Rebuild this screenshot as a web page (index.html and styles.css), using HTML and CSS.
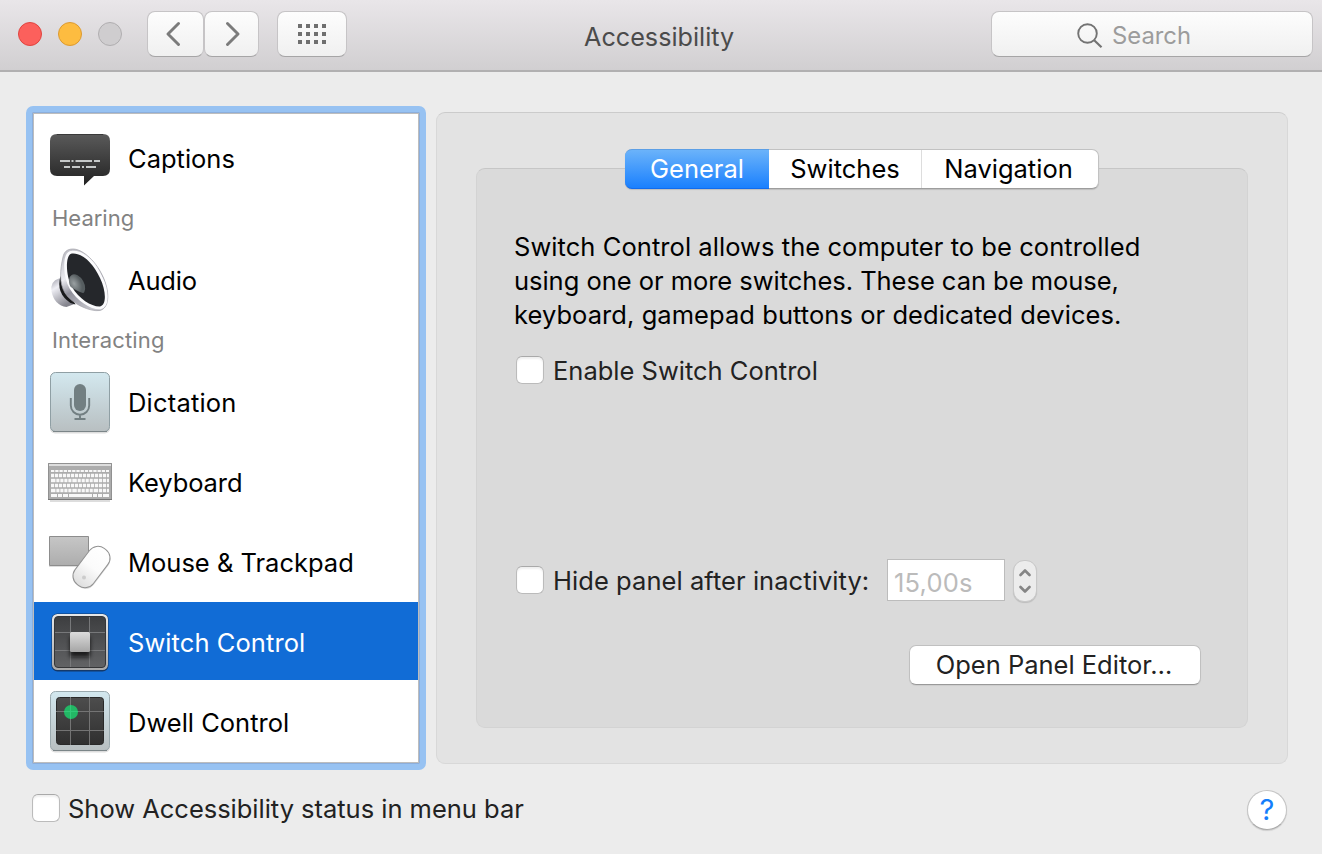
FILE: index.html
```html
<!DOCTYPE html>
<html lang="en">
<head>
<meta charset="utf-8">
<title>Accessibility</title>
<link rel="stylesheet" href="styles.css">
</head>
<body>
<header class="titlebar">
  <div class="lights"><span class="light close"></span><span class="light minimize"></span><span class="light zoom"></span></div>
  <div class="nav">
    <button class="tool back"><svg width="14" height="26" viewBox="0 0 14 26"><path d="M12.500 2.500 2 13l10.500 10.500" fill="none" stroke="#7b7b7b" stroke-width="2.900" stroke-linecap="round" stroke-linejoin="round"/></svg></button>
    <button class="tool forward"><svg width="14" height="26" viewBox="0 0 14 26"><path d="M1.500 2.500 12 13 1.500 23.500" fill="none" stroke="#7b7b7b" stroke-width="2.900" stroke-linecap="round" stroke-linejoin="round"/></svg></button>
  </div>
  <button class="tool all"><svg width="28" height="20" viewBox="0 0 28 20"><path d="M0 2h28M0 10h28M0 18h28" stroke="#6f6f6f" stroke-width="4" stroke-dasharray="4 4"/></svg></button>
  <h1 class="title">Accessibility</h1>
  <div class="search"><svg width="26" height="26" viewBox="0 0 26 26"><circle cx="10.500" cy="10.500" r="9.300" fill="none" stroke="#737373" stroke-width="1.900"/><path d="m17.200 17.200 7.300 7" stroke="#737373" stroke-width="2.200"/></svg><span class="placeholder">Search</span></div>
</header>
<main class="content">
  <nav class="sidebar">
    <div class="item"><span class="icon"><svg width="64" height="64" viewBox="0 0 64 64"><defs><linearGradient id="cap" x2="0" y2="1"><stop stop-color="#5a5a5a"/><stop offset="1" stop-color="#222"/></linearGradient></defs><path d="M9 8h46q7 0 7 7v28q0 7-7 7h-9L36 59.500V50H9q-7 0-7-7V15q0-7 7-7Z" fill="url(#cap)"/><path d="M9 8.500h46" stroke="#3a3a3a"/><path d="M12 35h10m1.500 0h2m2 0h16.500m2 0h6M16 41h6m2 0h8m2 0h2m2 0h10" stroke="#c6c9c9" stroke-width="2"/></svg></span><span>Captions</span></div>
    <h2 class="group">Hearing</h2>
    <div class="item"><span class="icon"><svg width="64" height="64" viewBox="0 0 64 64"><defs><linearGradient id="rear" x2=".5" y2="1"><stop stop-color="#9a9aa5"/><stop offset=".35" stop-color="#efeff5"/><stop offset="1" stop-color="#85858e"/></linearGradient><radialGradient id="dome" cx=".35" cy=".4"><stop stop-color="#9aa0a2"/><stop offset="1" stop-color="#565d60"/></radialGradient><linearGradient id="cone" gradientUnits="userSpaceOnUse" x1="14" y1="10" x2="40" y2="62"><stop stop-color="#c3c3ca"/><stop offset=".35" stop-color="#ececf1"/><stop offset=".6" stop-color="#8f8f9a"/><stop offset="1" stop-color="#c4c4cb"/></linearGradient><clipPath id="mouth"><path d="M24 5.500C17 6 17.500 28 24 39c7 12 20 20 28 19.500 7-1.500 6-16.500 0-28.500C45 15 34 4.500 24 5.500Z"/></clipPath></defs><path d="M11 30.500Q2 33 3.500 43.500q3 14 15 15.500l8-3-9-26Z" fill="url(#rear)"/><path d="M12.500 28q-5 17 10 27l5 1.500Z" fill="#18191b"/><path d="M25 1c10 0 24 13 31 30 6 15 5 29-4 31.500C42 64 24 56 17 45 11 35 12 22 15 9c1-5 4-8 10-8Z" fill="url(#cone)" stroke="#a4a4aa" stroke-width=".7"/><path d="M24 5.500C17 6 17.500 28 24 39c7 12 20 20 28 19.500 7-1.500 6-16.500 0-28.500C45 15 34 4.500 24 5.500Z" fill="#25272b" stroke="#fbfbfd" stroke-width="5.500"/><path d="M24 5.500C17 6 17.500 28 24 39c7 12 20 20 28 19.500 7-1.500 6-16.500 0-28.500C45 15 34 4.500 24 5.500Z" fill="#25272b"/><ellipse cx="29" cy="36.500" rx="7" ry="11" transform="rotate(-29 29 36.500)" fill="url(#dome)" clip-path="url(#mouth)"/></svg></span><span class="audio">Audio</span></div>
    <h2 class="group interacting">Interacting</h2>
    <div class="item"><span class="icon"><svg width="64" height="64" viewBox="0 0 64 64"><defs><linearGradient id="pale" x2="0" y2="1"><stop stop-color="#d3e8ef"/><stop offset="1" stop-color="#b8bfc1"/></linearGradient></defs><rect x="2" y="3.500" width="60" height="60" rx="5" fill="#0002"/><rect x="2.500" y="2.500" width="59" height="59" rx="5" fill="url(#pale)" stroke="#8f9fa4"/><path d="M5 61.500h54" stroke="#7b8588"/><rect x="26" y="14" width="12" height="27" rx="6" fill="#727f82"/><path d="M22.800 28v7.500a9.200 9.200 0 0 0 18.400 0V28M32 45v4M26.500 49h11" fill="none" stroke="#727f82" stroke-width="1.900"/></svg></span><span class="dictation">Dictation</span></div>
    <div class="item"><span class="icon"><svg width="64" height="64" viewBox="0 0 64 64"><path d="M2 50.500h60" stroke="#0002" stroke-width="3"/><path d="M0 13h64v37H0Z" fill="#acacac"/><path d="M1 14h62v2H1Z" fill="#ddd"/><path d="M.5 13.500h63v36H.5Z" fill="none" stroke="#919191"/><path d="M0 49.500h64" stroke="#777"/><path d="M3 21h58" stroke="#f8f8f8" stroke-width="2" stroke-dasharray="3.300 .93"/><path d="M3 25.500h58m-58 10h58" stroke="#f8f8f8" stroke-width="3.300" stroke-dasharray="3.200 .8"/><path d="M3 30.500h58m-58 10h58" stroke="#f8f8f8" stroke-width="3.300" stroke-dasharray="4.500 .8 3.200 .8 3.200 .8 3.200 .8 3.200 .8"/><path d="M3 45.500h6m1 0h4m1 0h5m1 0h23m1 0h4m1 0h4m1 0h6" stroke="#f8f8f8" stroke-width="3"/></svg></span><span class="keyboard">Keyboard</span></div>
    <div class="item"><span class="icon"><svg width="64" height="64" viewBox="0 0 64 64"><defs><linearGradient id="pad" x2="0" y2="1"><stop stop-color="#c6c6c6"/><stop offset="1" stop-color="#adadad"/></linearGradient><linearGradient id="mouse" x2="0" y2="1"><stop stop-color="#fff"/><stop offset=".5" stop-color="#fbfbfb"/><stop offset="1" stop-color="#dedede"/></linearGradient></defs><path d="M1.500 6.500h39v29h-39Z" fill="url(#pad)" stroke="#8d8d8d"/><path d="M1 36.500h40" stroke="#0002"/><rect x="31.500" y="15.500" width="24" height="45" rx="10.500" transform="rotate(37 43.500 38)" fill="#0002"/><rect x="32" y="14.500" width="23" height="45" rx="10.500" transform="rotate(37 43.500 37)" fill="url(#mouse)" stroke="#929292"/><circle cx="36" cy="47.500" r="2" fill="#ccc"/></svg></span><span>Mouse &amp; Trackpad</span></div>
    <div class="item selected"><span class="icon"><svg width="64" height="64" viewBox="0 0 64 64"><defs><linearGradient id="frame" x2="0" y2="1"><stop stop-color="#e8e8e8"/><stop offset="1" stop-color="#a9a9a9"/></linearGradient><linearGradient id="well" x2="0" y2="1"><stop stop-color="#3d3e40"/><stop offset="1" stop-color="#626365"/></linearGradient><linearGradient id="key" x2="0" y2="1"><stop stop-color="#dcdcdc"/><stop offset="1" stop-color="#a5a5a5"/></linearGradient><filter id="soft" x="-50%" y="-50%" width="200%" height="200%"><feGaussianBlur stdDeviation="2"/></filter></defs><rect x="3.500" y="3.500" width="57" height="58" rx="6" fill="#153969"/><rect x="4" y="4" width="56" height="56" rx="5.500" fill="url(#frame)"/><rect x="6.500" y="6.500" width="51" height="51" rx="3.500" fill="url(#well)" stroke="#353638"/><path d="M22.500 7v50M41.500 7v50M7 22.500h50M7 40.500h50" stroke="#77787a"/><rect x="22" y="27" width="20" height="20" fill="#111" opacity=".8" filter="url(#soft)"/><rect x="22" y="22" width="20" height="20" rx="1.500" fill="url(#key)"/></svg></span><span class="switch">Switch Control</span></div>
    <div class="item"><span class="icon"><svg width="64" height="64" viewBox="0 0 64 64"><defs><linearGradient id="dark" x2="0" y2="1"><stop stop-color="#4d4d4d"/><stop offset="1" stop-color="#303030"/></linearGradient></defs><rect x="2" y="2.500" width="60" height="60" rx="5" fill="#0002"/><rect x="2.500" y="1.500" width="59" height="59" rx="5" fill="url(#pale)" stroke="#9aa9ae"/><path d="M5 60.500h54" stroke="#7b8588"/><rect x="8.500" y="7.500" width="47" height="47" rx="3" fill="url(#dark)" stroke="#292929"/><path d="M22.500 7v48M41.500 7v48M8 21.500h48M8 40.500h48" stroke="#747474"/><circle cx="23" cy="22" r="7" fill="#23b765"/><path d="M22.500 15v14M16 21.500h14" stroke="#31c978"/></svg></span><span>Dwell Control</span></div>
  </nav>
  <section class="pane">
    <div class="box">
      <div class="tabs"><button class="tab active">General</button><button class="tab">Switches</button><button class="tab last">Navigation</button></div>
      <p class="intro"><span class="line-a">Switch Control allows the computer to be controlled</span><br><span class="line-b">using one or more switches. These can be mouse,</span><br><span class="line-a">keyboard, gamepad buttons or dedicated devices.</span></p>
      <label class="check enable"><span class="checkbox"></span><span>Enable Switch Control</span></label>
      <div class="hide-row"><label class="check"><span class="checkbox"></span><span class="hide-label">Hide panel after inactivity:</span></label><span class="field">15,00s</span><span class="stepper"><svg width="12" height="26" viewBox="0 0 12 26"><path d="m1.500 7 4.500-4.500L10.500 7M1.500 19 6 23.500l4.500-4.500" fill="none" stroke="#858585" stroke-width="2.600" stroke-linecap="round" stroke-linejoin="round"/></svg></span></div>
      <button class="open">Open Panel Editor…</button>
    </div>
  </section>
</main>
<footer class="footer"><label class="check"><span class="checkbox"></span><span class="status-label">Show Accessibility status in menu bar</span></label><button class="help">?</button></footer>
</body>
</html>
```
FILE: styles.css
```css
* { box-sizing: border-box; }
body { margin: 0; width: 1322px; height: 854px; overflow: hidden; display: flex; flex-direction: column; background: #ececec; color: #000; font: 25.500px/34px Inter, "Liberation Sans", sans-serif; white-space: nowrap; }
button { font: inherit; color: inherit; padding: 0; border: 0; display: flex; align-items: center; justify-content: center; }
svg { display: block; flex: none; }
h1, h2, p { margin: 0; font-weight: 400; }
.titlebar { height: 72px; flex: none; display: flex; align-items: flex-start; padding: 11px 9px 0 18px; background: linear-gradient(#e9e6e9, #d1cfd1); border-bottom: 2px solid #b1b0b1; }
.lights { display: flex; gap: 16px; padding-top: 11px; width: 129px; }
.light { width: 24px; height: 24px; border-radius: 50%; border: 1px solid; }
.close { background: #fc605c; border-color: #e0443f; }
.minimize { background: #fdbc40; border-color: #dc9a31; }
.zoom { background: #cfcdcf; border-color: #b0aeb0; }
.nav { display: flex; margin-right: 18px; }
.tool, .search { height: 46px; border: 1px solid #c6c4c6; border-bottom-color: #a6a5a6; border-radius: 8px; background: linear-gradient(#fdfdfd, #f0f0f0); }
.back { width: 57px; padding-right: 6px; }
.forward { width: 55px; padding-left: 2px; }
.all { width: 70px; }
.title { flex: 1; padding-left: 237px; font-size: 25.200px; line-height: 52px; color: #4b4b4b; }
.search { width: 322px; display: flex; align-items: center; justify-content: center; gap: 9px; padding: 3px 36px 0 0; color: #9c9c9c; }
.placeholder { font-size: 23.800px; padding-top: 1px; }
.content { display: flex; gap: 10px; padding: 34px 34px 0 26px; flex: none; }
.sidebar { width: 400px; height: 664px; border: 6px solid #97c2f2; border-radius: 7px; background: #fff; box-shadow: inset 0 0 0 1px #8caedb, inset 0 0 0 2px #bdbdbd; padding: 6px 2px 0; }
.item { height: 78px; margin-bottom: 2px; display: flex; align-items: center; padding: 4px 0 0 14px; gap: 16px; }
.icon { margin-top: -2px; }
.item.selected { background: #116cd6; color: #fff; }
.audio { letter-spacing: -.2px; }
.dictation { letter-spacing: .2px; }
.keyboard { letter-spacing: -.1px; }
.switch { letter-spacing: .07px; }
.group { height: 42px; padding: 2px 0 0 18px; font-size: 22px; line-height: 36px; color: #828282; }
.interacting { letter-spacing: .15px; }
.pane { width: 852px; height: 652px; margin-top: 6px; padding: 55px 39px 0; background: #e3e3e3; border: 1px solid #d8d8d8; border-top-color: #cbcbcb; border-radius: 9px; }
.box { height: 560px; background: #dadada; border: 1px solid #d3d3d3; border-top-color: #c6c6c6; border-radius: 9px; display: flex; flex-direction: column; padding-left: 37px; }
.tabs { display: flex; flex: none; width: 474px; height: 40px; margin: -20px 0 0 111px; border: 1px solid #c2c2c2; border-bottom-color: #9d9d9d; border-radius: 7px; background: #fff; box-shadow: 0 1px 1px #0002; }
.tab { background: none; width: 176px; }
.tab:nth-child(2) { width: 153px; border-right: 1px solid #ddd; }
.tab.last { padding-right: 3px; }
.tab.active { width: 144px; margin: -1px 0 -1px -1px; color: #fff; background: linear-gradient(#6bb3fa, #1a80fe); border-radius: 7px 0 0 7px; border-bottom: 1px solid #116cee; border-top: 1px solid #5c9fe6; }
.intro { margin-top: 41px; height: 102px; }
.line-a { letter-spacing: .06px; }
.line-b { letter-spacing: -.03px; }
.check { display: flex; align-items: center; gap: 9px; color: #222; }
.checkbox { width: 28px; height: 28px; border: 1px solid #bbb; border-top-color: #a9a9a9; border-radius: 6px; background: #fff; box-shadow: inset 0 2px 2px #0001; }
.enable { margin: 22px 0 0 2px; }
.enable .checkbox { margin-top: -2px; }
.hide-row { display: flex; align-items: center; margin: 170px 0 0 2px; height: 44px; }
.hide-row .check { width: 371px; }
.hide-label { padding-top: 2px; letter-spacing: .06px; }
.field { width: 118px; height: 42px; border: 1px solid #bcbcbc; background: #fff; color: #bbb; padding: 6px 0 0 6px; letter-spacing: .2px; }
.stepper { width: 24px; height: 42px; margin: 2px 0 0 8px; border: 1px solid #c8c8c8; border-radius: 11px; background: #ececec; display: flex; align-items: center; justify-content: center; box-shadow: 0 1px 1px #0002; }
.open { width: 292px; height: 40px; margin: 43px 0 0 395px; padding-right: 2px; border: 1px solid #c0c0c0; border-bottom-color: #999; border-radius: 7px; background: #fff; color: #222; box-shadow: 0 1px 1px #0001; }
.footer { display: flex; align-items: center; justify-content: space-between; padding: 20px 35px 0 32px; }
.footer .check { gap: 8px; margin-top: -4px; }
.status-label { padding-top: 2px; letter-spacing: -.02px; }
.help { width: 40px; height: 40px; border: 1px solid #c4c4c4; border-bottom-color: #aaa; border-radius: 50%; background: #fff; color: #147efb; font-size: 29px; box-shadow: 0 1px 1px #0002; }
```
